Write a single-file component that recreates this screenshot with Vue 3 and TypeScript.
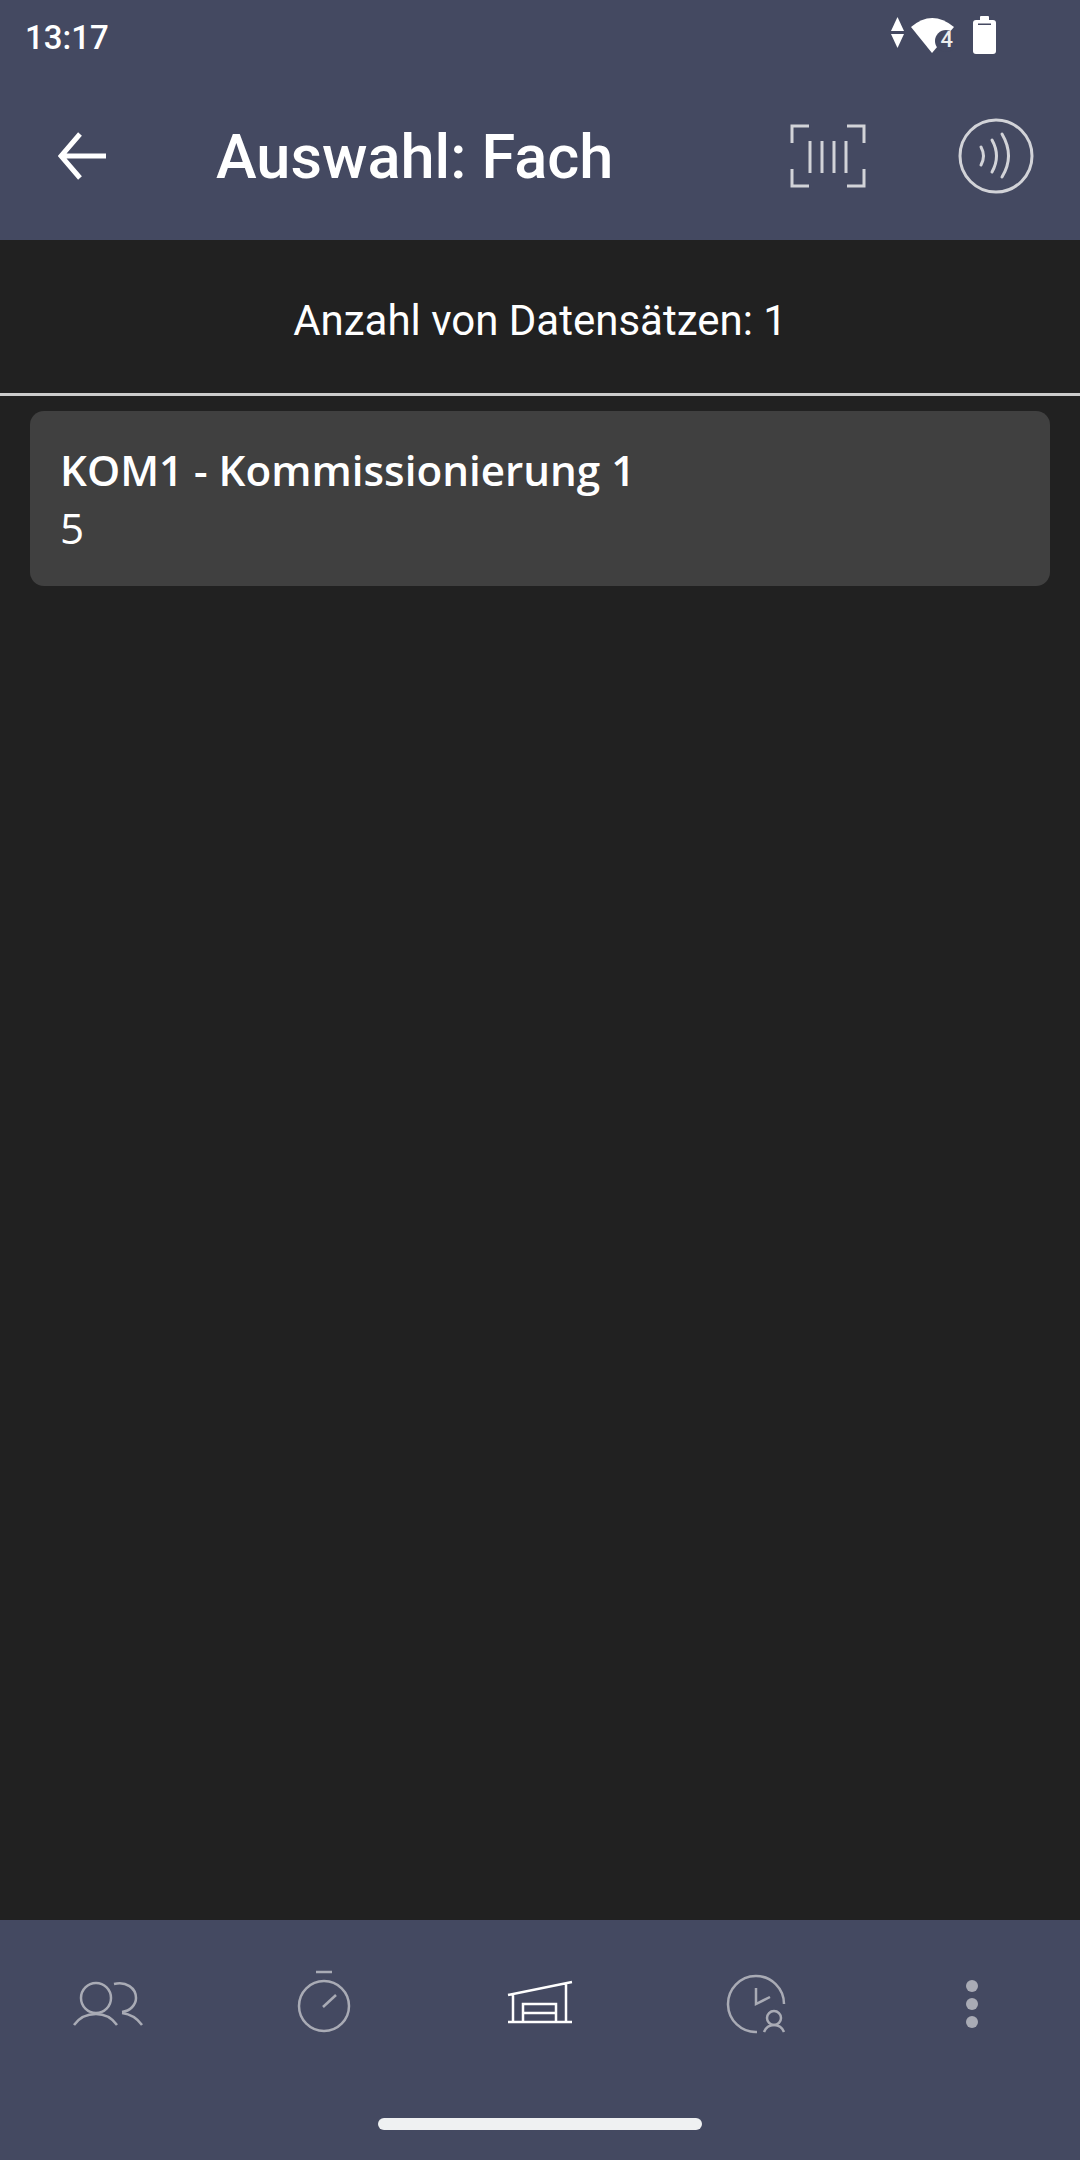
<script setup lang="ts">
interface Entry {
  title: string;
  detail: string;
}

const entries: Entry[] = [{ title: "KOM1 - Kommissionierung 1", detail: "5" }];
</script>

<template>
  <div class="page">
    <header class="header">
      <div class="status">
        <span class="time">13:17</span>
        <svg class="status-icons" width="120" height="72" viewBox="0 0 120 72">
          <path class="solid" d="M11 31H24L17.5 17Z" />
          <path class="solid" d="M11 34H24L17.5 48Z" />
          <path class="solid" d="M52 53L31 27Q52 9 74 27Z" />
          <circle class="cutout" cx="66" cy="41" r="11" />
          <text class="net" x="60.5" y="47">4</text>
          <rect class="solid" x="93" y="20" width="23" height="34" rx="3" />
          <rect class="solid" x="100" y="16" width="9" height="5" rx="1" />
          <rect class="cutout" x="98" y="23.5" width="13" height="1.5" />
        </svg>
      </div>
      <div class="toolbar">
        <svg class="back" width="48" height="48" viewBox="0 0 48 48">
          <path class="stroke-white" d="M48 24H3M22 2L3 24L22 46" />
        </svg>
        <h1 class="title">Auswahl: Fach</h1>
        <svg class="scan" width="76" height="64" viewBox="0 0 76 64">
          <path class="stroke-soft" d="M19 2H2V19M57 2H74V19M19 62H2V45M57 62H74V45" />
          <path class="stroke-soft" d="M20 17V49M32 17V49M44 17V49M56 17V49" />
        </svg>
        <svg class="nfc" width="76" height="76" viewBox="0 0 76 76">
          <circle class="stroke-soft" cx="38" cy="38" r="36" />
          <path class="stroke-soft round" d="M23 29Q28 38 23 47M34 22Q43 38 34 54M44 16Q57 38 44 59" />
        </svg>
      </div>
    </header>

    <main class="content">
      <div class="count">Anzahl von Datensätzen: 1</div>
      <div class="divider"></div>
      <ul class="list">
        <li v-for="entry in entries" :key="entry.title" class="card">
          <div class="card-title">{{ entry.title }}</div>
          <div class="card-detail">{{ entry.detail }}</div>
        </li>
      </ul>
    </main>

    <footer class="footer">
      <nav class="tabs">
        <svg class="tab" width="80" height="80" viewBox="0 0 80 80">
          <g class="stroke-muted">
            <circle cx="28" cy="34" r="15" />
            <path d="M6 61C11 54 19 50 28 50S44 54 49 61" />
            <path d="M46 20C58 17 68 24 68 34C68 41 62 47 54 48" />
            <path d="M54 49C62 50 69 54 74 61" />
          </g>
        </svg>
        <svg class="tab" width="80" height="80" viewBox="0 0 80 80">
          <g class="stroke-muted">
            <circle cx="40" cy="42" r="25" />
            <path d="M32 8H48" />
            <path d="M39 43L52 31" />
          </g>
        </svg>
        <svg class="tab" width="80" height="80" viewBox="0 0 80 80">
          <g class="stroke-active">
            <path d="M8 31L72 18M8 58H72M13 31V58M66 19V58" />
            <path d="M23 58V40H56V58M23 49H56" />
          </g>
        </svg>
        <svg class="tab" width="80" height="80" viewBox="0 0 80 80">
          <g class="stroke-muted">
            <path d="M68 40A28 28 0 1 0 41 68" />
            <path d="M40 24V40L54 33" />
            <circle cx="58" cy="54" r="7" />
            <path d="M48 68C50 63 54 61 58 61S66 63 68 68" />
          </g>
        </svg>
        <svg class="tab" width="80" height="80" viewBox="0 0 80 80">
          <circle class="dot" cx="40" cy="22" r="6" />
          <circle class="dot" cx="40" cy="40" r="6" />
          <circle class="dot" cx="40" cy="58" r="6" />
        </svg>
      </nav>
      <div class="home-indicator"></div>
    </footer>
  </div>
</template>

<style scoped>
.page {
  width: 1080px;
  height: 2160px;
  display: flex;
  flex-direction: column;
  background: #212121;
  color: #fff;
  font-family: Roboto, "Liberation Sans", sans-serif;
}

.header {
  height: 240px;
  flex: none;
  background: #444961;
}

.status {
  height: 72px;
  display: flex;
  align-items: center;
  justify-content: space-between;
  padding: 0 80px 0 25px;
}

.time {
  padding-top: 2px;
  font-size: 33px;
  font-weight: 500;
}

.solid {
  fill: #fff;
}

.cutout {
  fill: #444961;
}

.net {
  fill: #eceded;
  font-size: 22px;
  font-weight: 500;
  font-family: Roboto, sans-serif;
}

.toolbar {
  height: 168px;
  display: flex;
  align-items: center;
  padding: 0 46px 0 58px;
}

.back {
  flex: none;
}

.title {
  flex: 1;
  margin: 0 0 0 110px;
  padding-top: 2px;
  font-size: 61.3px;
  font-weight: 500;
}

.scan {
  flex: none;
  margin-right: 92px;
}

.nfc {
  flex: none;
}

.stroke-white,
.stroke-soft,
.stroke-muted,
.stroke-active {
  fill: none;
}

.stroke-white {
  stroke: #fff;
  stroke-width: 5;
}

.stroke-soft {
  stroke: #d2d3d8;
  stroke-width: 3;
}

.round {
  stroke-linecap: round;
}

.stroke-muted {
  stroke: #a9abb5;
  stroke-width: 2.5;
}

.stroke-active {
  stroke: #fff;
  stroke-width: 2.5;
}

.dot {
  fill: #a9abb5;
}

.content {
  flex: 1;
  min-height: 0;
}

.count {
  height: 153px;
  box-sizing: border-box;
  padding-top: 8px;
  display: flex;
  align-items: center;
  justify-content: center;
  font-size: 42px;
}

.divider {
  height: 3px;
  background: #cccccc;
}

.list {
  margin: 0;
  padding: 15px 30px;
  list-style: none;
}

.card {
  height: 175px;
  box-sizing: border-box;
  padding: 30px 30px 0;
  border-radius: 14px;
  background: #404040;
  font-family: "Open Sans", "Noto Sans", sans-serif;
  font-size: 42.2px;
  line-height: 57px;
}

.card-title {
  font-weight: 600;
}

.card-detail {
  padding-top: 1px;
}

.footer {
  height: 240px;
  flex: none;
  background: #444961;
}

.tabs {
  height: 168px;
  display: grid;
  grid-template-columns: repeat(5, 1fr);
  align-items: center;
  justify-items: center;
}

.home-indicator {
  width: 324px;
  height: 12px;
  margin: 30px auto 0;
  border-radius: 6px;
  background: #eff1f2;
}
</style>
